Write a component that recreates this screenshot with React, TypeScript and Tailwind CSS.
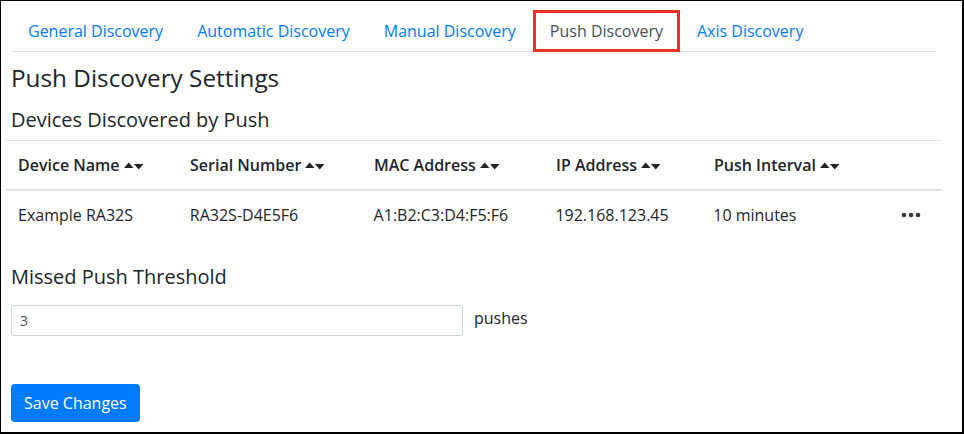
import React from "react";

const tabs = ["General Discovery", "Automatic Discovery", "Manual Discovery", "Push Discovery", "Axis Discovery"];

const SortIcon = () => (
  <svg width="20" height="10" viewBox="0 0 20 10" className="inline-block ml-[4px] -mt-[2px]">
    <polygon points="0,7 4.75,1.5 9.5,7" fill="#212529" />
    <polygon points="10,3 19.5,3 14.75,8.5" fill="#212529" />
  </svg>
);

const Dots = () => (
  <svg width="20" height="6" viewBox="0 0 20 6">
    <circle cx="3" cy="3" r="2.3" fill="#343a40" />
    <circle cx="10" cy="3" r="2.3" fill="#343a40" />
    <circle cx="17" cy="3" r="2.3" fill="#343a40" />
  </svg>
);

const cols = [
  { label: "Device Name", w: "w-[172px]" },
  { label: "Serial Number", w: "w-[184px]" },
  { label: "MAC Address", w: "w-[182px]" },
  { label: "IP Address", w: "w-[158px]" },
  { label: "Push Interval", w: "w-[188px]" },
];

const row = ["Example RA32S", "RA32S-D4E5F6", "A1:B2:C3:D4:F5:F6", "192.168.123.45", "10 minutes"];

export default function App() {
  return (
    <div
      className="w-[964px] h-[434px] bg-white border-t border-l border-r-2 border-b-2 border-black text-[#212529] overflow-hidden"
      style={{ fontFamily: '"Open Sans", "Noto Sans", sans-serif' }}
    >
      <div className="pl-[10px] pt-[9px]">
        {/* tabs */}
        <div className="w-[925px] flex border-b border-[#dee2e6]">
          {tabs.map((t) =>
            t === "Push Discovery" ? (
              <div key={t} className="-mb-px border-[3px] border-[#ea3323] px-[14px] py-[6px] text-base leading-6 text-[#495057]">
                {t}
              </div>
            ) : (
              <div key={t} className="-mb-px border border-transparent px-[16px] py-[8px] text-base leading-6 text-[#007bff]">
                {t}
              </div>
            )
          )}
        </div>

        <h4 className="mt-[11px] text-[24.3px] leading-[29px] font-normal">Push Discovery Settings</h4>
        <h5 className="mt-[16px] text-[20px] leading-[24px] font-normal">Devices Discovered by Push</h5>
      </div>

      {/* table */}
      <div className="ml-[5px] mt-[8px] w-[936px] border-t border-[#dee2e6]">
        <div className="flex border-b-2 border-[#dee2e6] text-base leading-6 font-semibold">
          {cols.map((c) => (
            <div key={c.label} className={`${c.w} p-3 whitespace-nowrap`}>
              {c.label}
              <SortIcon />
            </div>
          ))}
          <div className="flex-1 p-3" />
        </div>
        <div className="flex text-base leading-6">
          {row.map((v, i) => (
            <div key={i} className={`${cols[i].w} p-3 whitespace-nowrap`}>
              {v}
            </div>
          ))}
          <div className="flex-1 p-3 flex items-center justify-end pr-[21px]">
            <Dots />
          </div>
        </div>
      </div>

      <div className="pl-[10px]">
        <h5 className="mt-[26px] text-[20px] leading-[24px] font-normal">Missed Push Threshold</h5>
        <div className="mt-[16px] flex items-start gap-[11px]">
          <input
            readOnly
            value="3"
            className="w-[452px] h-[31px] border border-[#ced4da] rounded-[3px] px-2 text-sm text-[#495057] outline-none"
          />
          <span className="text-base leading-6 mt-[1px]">pushes</span>
        </div>
        <button className="mt-[48px] h-[38px] px-[13px] bg-[#007bff] text-white text-base leading-6 rounded-[4px]">
          Save Changes
        </button>
      </div>
    </div>
  );
}
